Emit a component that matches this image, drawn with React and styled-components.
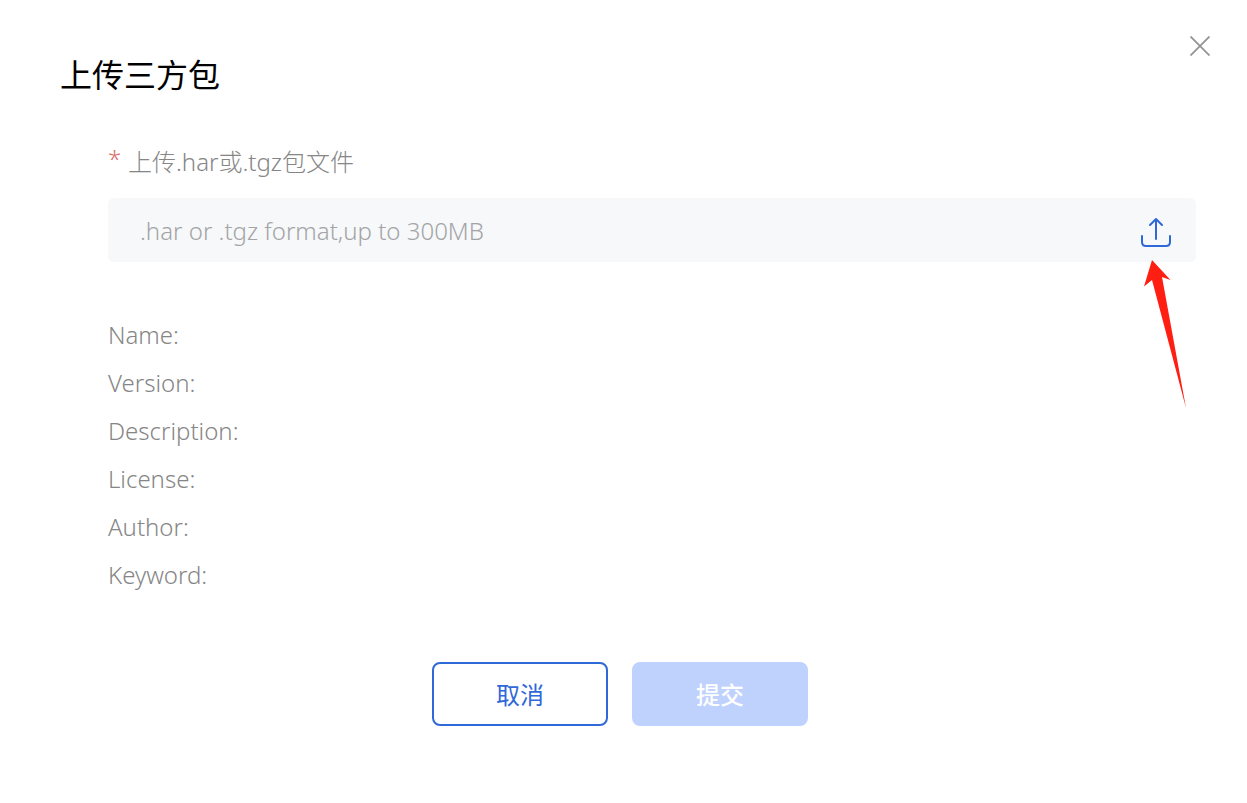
import React from 'react';
import styled, { createGlobalStyle } from 'styled-components';

const BLUE = '#2f68d8';
const LIGHT_BLUE = '#bfd1fd';
const FIELD_GREY = '#f6f8fa';
const TEXT_GREY = '#868686';
const PLACEHOLDER_GREY = '#a4a4a6';
const RED = '#ff1f12';
const WHITE = '#ffffff';

const GlobalStyle = createGlobalStyle`
    * {
        box-sizing: border-box;
    }

    body {
        margin: 0;
        background-color: ${WHITE};
        font-family: "Noto Sans", "Noto Sans CJK SC", sans-serif;
        font-size: 24px;
    }
`;

const Dialog = styled.section`
    padding: 24px 51px 76px 60px;
`;

const Header = styled.header`
    display: flex;
    justify-content: space-between;
    align-items: flex-start;
    margin-right: -26px;
`;

const Title = styled.h1`
    margin: 27px 0 0;
    font-size: 32px;
    font-weight: 400;
    line-height: 48px;
    color: #000000;
`;

const IconButton = styled.button`
    display: flex;
    align-items: center;
    justify-content: center;
    flex: none;
    width: ${({ $size }) => $size}px;
    height: ${({ $size }) => $size}px;
    padding: 0;
    border: 0;
    background: none;
    color: ${({ $color }) => $color};
    cursor: pointer;
`;

const Form = styled.form`
    margin: 45px 0 0;
`;

const Fields = styled.div`
    padding-left: 48px;
`;

const Label = styled.label`
    display: flex;
    gap: 8px;
    margin-bottom: 18px;
    font-weight: 300;
    line-height: 36px;
    color: ${TEXT_GREY};
`;

const Required = styled.span`
    width: 12px;
    line-height: 30px;
    color: #dd6c6c;
`;

const UploadField = styled.div`
    position: relative;
    display: flex;
    align-items: center;
    height: 64px;
    padding: 2px 20px 0 32px;
    border-radius: 6px;
    background-color: ${FIELD_GREY};
`;

const FileName = styled.input`
    flex: 1;
    min-width: 0;
    padding: 0;
    border: 0;
    outline: 0;
    background: none;
    font: inherit;
    font-weight: 300;
    line-height: 36px;
    color: ${TEXT_GREY};

    &::placeholder {
        color: ${PLACEHOLDER_GREY};
        opacity: 1;
    }
`;

const Pointer = styled.svg`
    position: absolute;
    top: 61px;
    right: 7px;
    width: 46px;
    height: 150px;
    pointer-events: none;
`;

const Details = styled.dl`
    margin: 49px 0 0;
`;

const Detail = styled.div`
    display: flex;
    gap: 8px;
    font-weight: 300;
    line-height: 48px;
    color: ${TEXT_GREY};
`;

const DetailValue = styled.dd`
    margin: 0;
`;

const Footer = styled.footer`
    display: flex;
    justify-content: center;
    gap: 24px;
    margin-top: 63px;
    padding-right: 16px;
`;

const Button = styled.button`
    width: 176px;
    height: 64px;
    padding: 0 0 2px;
    border: 2px solid ${({ $primary }) => ($primary ? LIGHT_BLUE : BLUE)};
    border-radius: 8px;
    background-color: ${({ $primary }) => ($primary ? LIGHT_BLUE : WHITE)};
    font: inherit;
    font-weight: ${({ $primary }) => ($primary ? 500 : 400)};
    color: ${({ $primary }) => ($primary ? WHITE : BLUE)};
    cursor: pointer;

    &:disabled {
        cursor: not-allowed;
    }
`;

const CloseIcon = () => (
    <svg width="20" height="20" viewBox="0 0 20 20" fill="none" stroke="currentColor" strokeWidth="1.8">
        <path d="M0.5 0.5L19.5 19.5M19.5 0.5L0.5 19.5" />
    </svg>
);

const UploadIcon = () => (
    <svg
        width="32"
        height="32"
        viewBox="0 0 32 32"
        fill="none"
        stroke="currentColor"
        strokeWidth="2"
        strokeLinecap="round"
        strokeLinejoin="round"
    >
        <path d="M16 24V4M10 10L16 4L22 10" />
        <path d="M2 21V27Q2 31 6 31H26Q30 31 30 27V21" />
    </svg>
);

const DETAILS = ['Name', 'Version', 'Description', 'License', 'Author', 'Keyword'];

const App = () => (
    <>
        <GlobalStyle />
        <Dialog role="dialog" aria-labelledby="dialog-title">
            <Header>
                <Title id="dialog-title">上传三方包</Title>
                <IconButton type="button" aria-label="关闭" $size={44} $color="#949494">
                    <CloseIcon />
                </IconButton>
            </Header>
            <Form onSubmit={(e) => e.preventDefault()}>
                <Fields>
                    <Label htmlFor="package-file">
                        <Required>*</Required>
                        上传.har或.tgz包文件
                    </Label>
                    <UploadField>
                        <FileName
                            id="package-file"
                            type="text"
                            placeholder=".har or .tgz format,up to 300MB"
                            readOnly
                        />
                        <IconButton type="button" aria-label="上传" $size={40} $color={BLUE}>
                            <UploadIcon />
                        </IconButton>
                        <Pointer viewBox="0 0 46 150" aria-hidden="true">
                            <path
                                d="M9 1L27.5 21L19 18L43 149L9 21L1 27.5Z"
                                fill={RED}
                            />
                        </Pointer>
                    </UploadField>
                    <Details>
                        {
                            DETAILS.map((name) => (
                                <Detail key={name}>
                                    <dt>{`${name}:`}</dt>
                                    <DetailValue />
                                </Detail>
                            ))
                        }
                    </Details>
                </Fields>
                <Footer>
                    <Button type="button">取消</Button>
                    <Button type="submit" $primary disabled>提交</Button>
                </Footer>
            </Form>
        </Dialog>
    </>
);

export default App;
